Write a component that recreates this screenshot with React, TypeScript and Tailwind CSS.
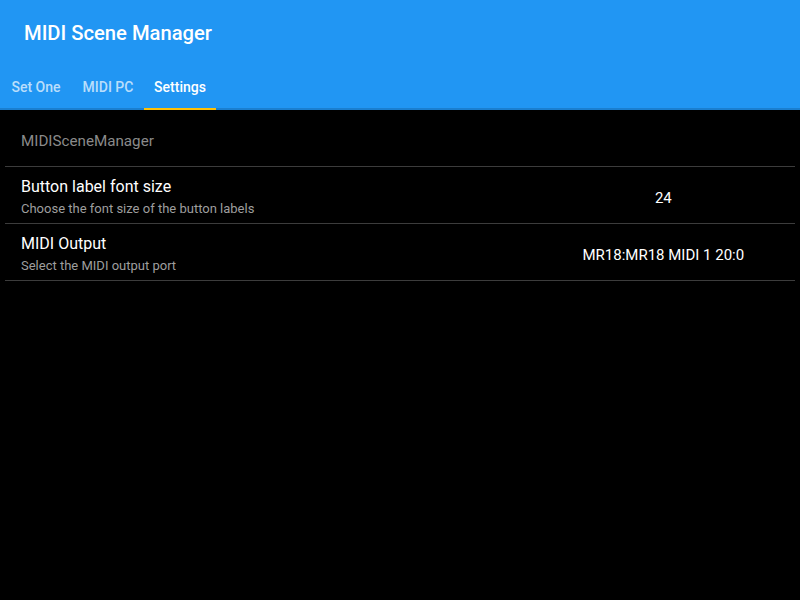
const tabs = ['Set One', 'MIDI PC', 'Settings'];

const rows = [
  { title: 'Button label font size', desc: 'Choose the font size of the button labels', value: '24' },
  { title: 'MIDI Output', desc: 'Select the MIDI output port', value: 'MR18:MR18 MIDI 1 20:0' },
];

export default function App() {
  return (
    <div className="w-[800px] h-[600px] bg-black flex flex-col font-['Roboto',sans-serif]">
      <header className="bg-[#2196f3]">
        <div className="h-[66px] flex items-center px-6">
          <h1 className="text-white text-[20.2px] font-medium">MIDI Scene Manager</h1>
        </div>
        <nav className="h-[42px] flex">
          {tabs.map((t) => {
            const active = t === 'Settings';
            return (
              <div
                key={t}
                className={
                  'w-[72px] flex items-center justify-center text-[14px] font-medium pt-[1px] ' +
                  (active ? 'text-white' : 'text-white/70')
                }
              >
                {t}
              </div>
            );
          })}
        </nav>
        <div className="h-[2px] bg-[#1a7fd0] flex">
          <div className="w-[144px]" />
          <div className="w-[72px] bg-[#ffc107]" />
        </div>
      </header>

      <main className="px-[5px]">
        <div className="h-[57px] flex items-center px-4 pt-[6px] text-[15.2px] text-[#8a8a8a] border-b border-[#3c3c3c]">
          MIDISceneManager
        </div>
        {rows.map((r) => (
          <div key={r.title} className="h-[57px] grid grid-cols-[2fr_1fr] border-b border-[#3c3c3c]">
            <div className="flex flex-col px-4 pt-[10px] gap-[4px]">
              <div className="text-white text-[16px] leading-[20px]">{r.title}</div>
              <div className="text-[#9e9e9e] text-[13px] leading-[16px]">{r.desc}</div>
            </div>
            <div className="flex items-center justify-center pt-[6px] text-white text-[15px]">{r.value}</div>
          </div>
        ))}
      </main>
    </div>
  );
}
